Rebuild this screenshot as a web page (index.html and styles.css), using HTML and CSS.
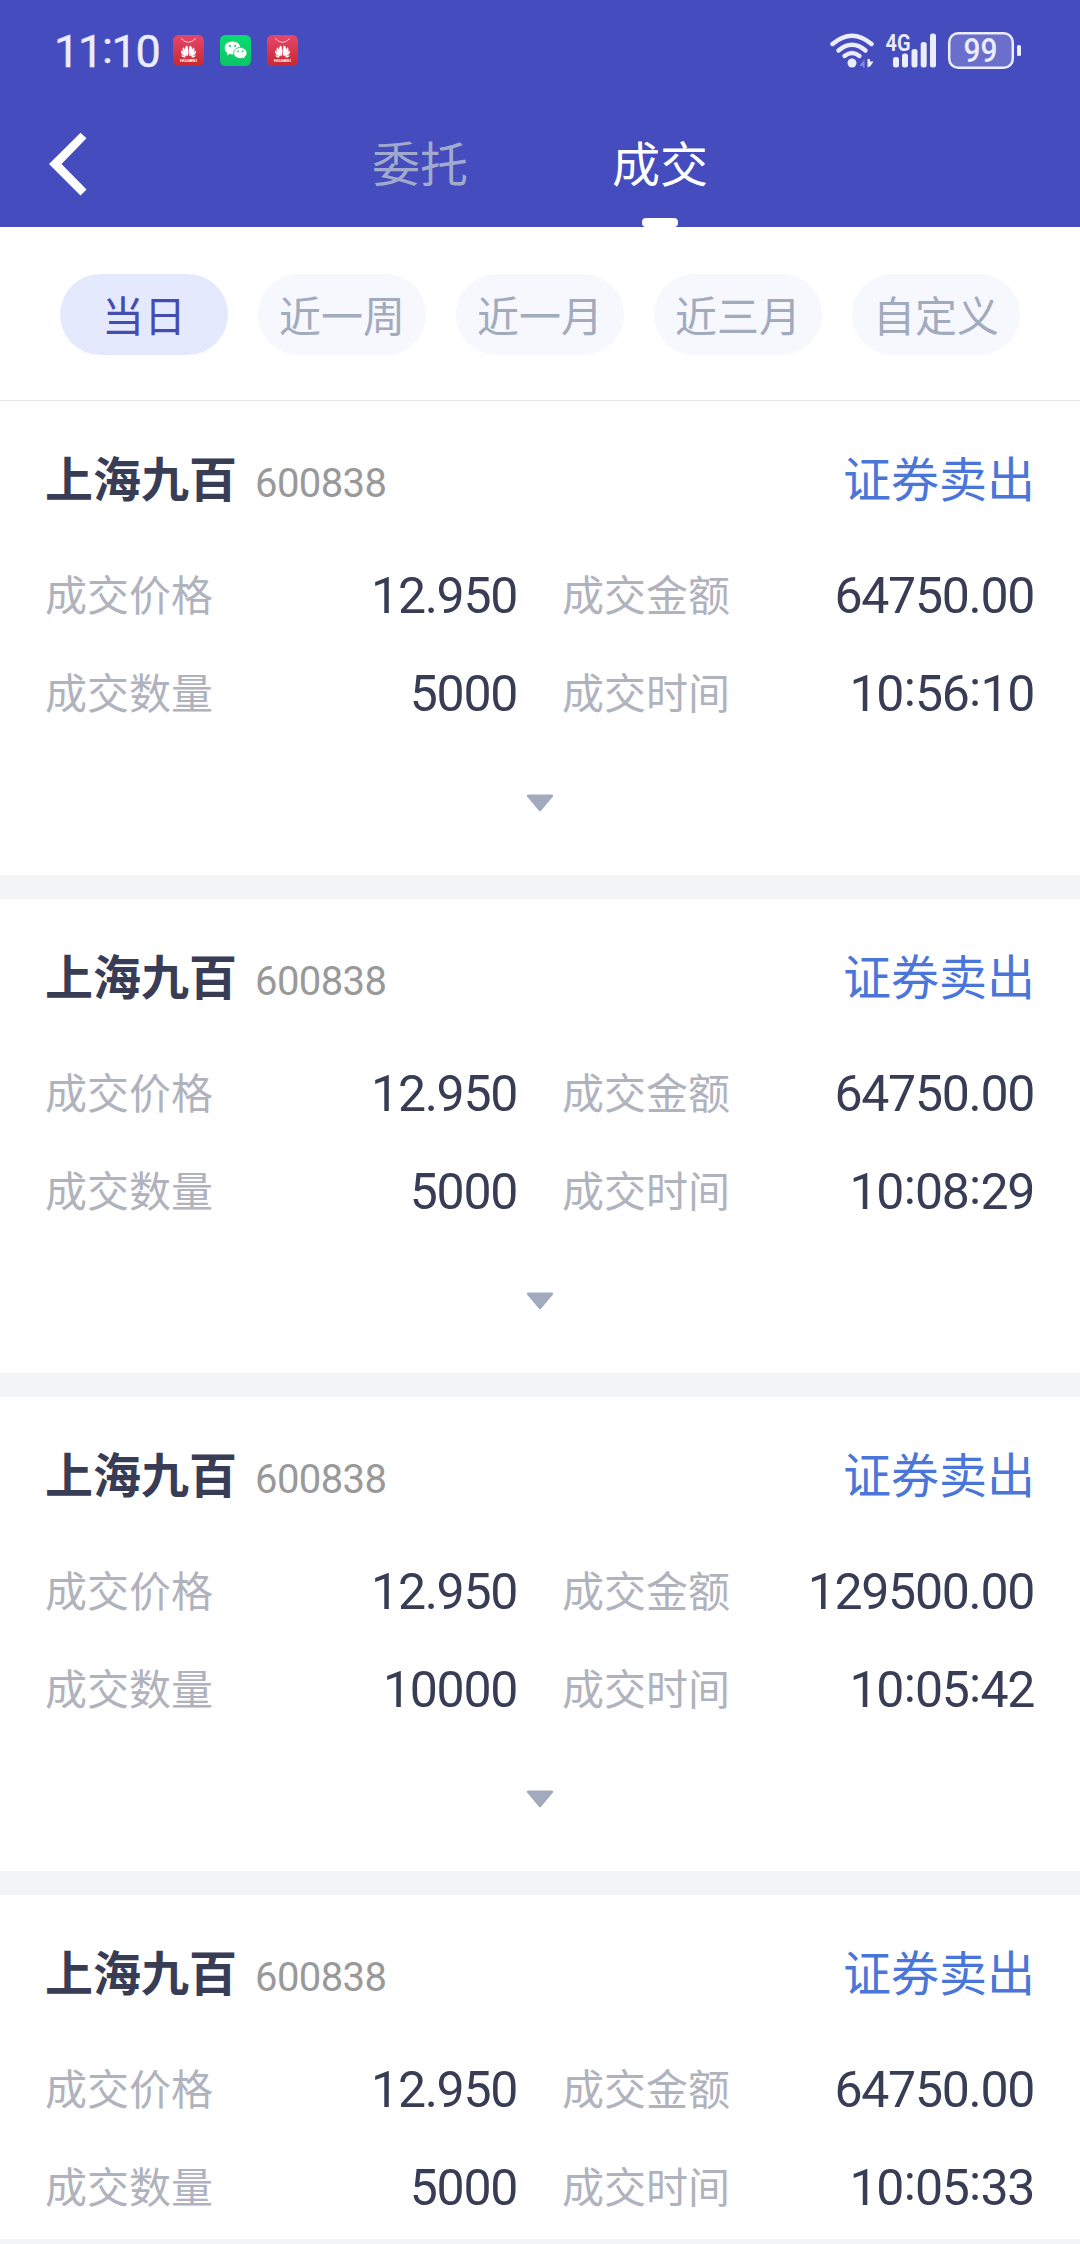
FILE: index.html
```html
<!DOCTYPE html>
<html lang="zh-CN">
<head>
<meta charset="utf-8">
<title>成交</title>
<link rel="stylesheet" href="styles.css">
</head>
<body>
<svg class="defs" width="0" height="0" aria-hidden="true">
  <defs>
    <linearGradient id="red" x1="0" y1="0" x2="0" y2="1"><stop offset="0" stop-color="#e5476a"/><stop offset="1" stop-color="#cb2731"/></linearGradient>
    <linearGradient id="green" x1="0" y1="0" x2="0" y2="1"><stop offset="0" stop-color="#08dc70"/><stop offset="1" stop-color="#0cc565"/></linearGradient>
    <symbol id="huawei" viewBox="0 0 31 31">
      <rect width="31" height="31" rx="5.5" fill="url(#red)"/>
      <path d="M8 3.2Q15.500 11.500 23 3.200" fill="none" stroke="#ffd5da" stroke-width="1"/>
      <g fill="#fff">
        <path d="M14.900 21.300C12 17.500 10.500 12.500 14 10.600C15.600 13 15.400 18 14.900 21.300Z"/>
        <path d="M14 21.300C9.500 18.500 8.500 14.500 10.300 12.300C12.500 14.500 13.800 18 14 21.300Z"/>
        <path d="M13.300 21.500C9 20.500 7.600 18 8 15.500C10.500 17 12.400 19 13.300 21.500Z"/>
        <path d="M12.800 22.200C10.500 23 8.800 22 8.200 20.300C10 20.400 11.500 21 12.800 22.200Z"/>
        <path d="M16.100 21.300C19 17.500 20.500 12.500 17 10.600C15.400 13 15.600 18 16.100 21.300Z"/>
        <path d="M17 21.300C21.500 18.500 22.500 14.500 20.700 12.300C18.500 14.500 17.200 18 17 21.300Z"/>
        <path d="M17.700 21.500C22 20.500 23.400 18 23 15.500C20.500 17 18.600 19 17.700 21.500Z"/>
        <path d="M18.200 22.200C20.500 23 22.200 22 22.800 20.300C21 20.400 19.500 21 18.200 22.200Z"/>
      </g>
      <text x="15.500" y="27.300" text-anchor="middle" textLength="17" lengthAdjust="spacingAndGlyphs" class="brand">HUAWEI</text>
    </symbol>
  </defs>
</svg>

<header class="top">
  <div class="status">
    <span class="clock">11<i>:</i>10</span>
    <div class="apps">
      <svg width="31" height="31"><use href="#huawei"/></svg>
      <svg width="31" height="31" viewBox="0 0 31 31">
        <rect width="31" height="31" rx="5.500" fill="url(#green)"/>
        <path d="M12.500 6.500C8 6.500 4.700 9.300 4.700 13C4.700 15.200 5.700 16.900 7.400 18L6.700 20.500L9.500 19C10.500 19.300 11.500 19.400 12.500 19.400C17 19.400 20.300 16.500 20.300 13C20.300 9.300 17 6.500 12.500 6.500Z" fill="#fff"/>
        <path d="M20.300 12.500C16.600 12.500 13.600 14.900 13.600 18C13.600 21.100 16.600 23.400 20.300 23.400C21.200 23.400 22 23.300 22.800 23L25 24.200L24.500 22.100C26 21.100 27 19.700 27 18C27 14.900 24 12.500 20.300 12.500Z" fill="#fff" stroke="#0acc69" stroke-width=".8"/>
        <g fill="#0acc69"><circle cx="9.900" cy="11" r="1.100"/><circle cx="15.200" cy="11" r="1.100"/><circle cx="18.100" cy="16.300" r=".9"/><circle cx="22.600" cy="16.300" r=".9"/></g>
      </svg>
      <svg width="31" height="31"><use href="#huawei"/></svg>
    </div>
    <svg class="signals" width="192" height="46" viewBox="0 -6 192 46">
      <g fill="none" stroke="#ececff" stroke-width="4.400" stroke-linecap="round">
        <path d="M2.500 13Q22 -3.500 41.500 13"/>
        <path d="M8.500 19.500Q22 8 35.500 19.500"/>
        <path d="M14.500 25Q22 19 29.500 25"/>
      </g>
      <circle cx="22" cy="32" r="4.500" fill="#ececff"/>
      <path d="M30 34L34.500 28.500V36.500H33V35H30Z" fill="#8287d6"/>
      <path d="M37.500 28V36.500L40.500 35L43.500 30.500H40V28Z" fill="#ececff"/>
      <text x="55.500" y="19.500" textLength="25" lengthAdjust="spacingAndGlyphs" class="net">4G</text>
      <g fill="#ececff">
        <rect x="63" y="26" width="6" height="10.500" rx="2.500"/>
        <rect x="72" y="22.500" width="6" height="14" rx="2.500"/>
        <rect x="81.500" y="18" width="6" height="18.500" rx="2.500"/>
        <rect x="90.700" y="11" width="6" height="25.500" rx="2.500"/>
        <rect x="100" y="2.500" width="6" height="34" rx="2.500"/>
        <rect x="187" y="14" width="4" height="11" rx="1.500"/>
      </g>
      <rect x="119.200" y="2.200" width="63.600" height="34.600" rx="9" fill="#696fca" stroke="#ececff" stroke-width="2.500"/>
      <text x="133.500" y="31" textLength="34" lengthAdjust="spacingAndGlyphs" class="charge">99</text>
    </svg>
  </div>
  <nav class="nav">
    <svg class="back" width="38" height="64" viewBox="0 0 38 64"><path d="M31.500 .7L37.500 6.300L12.500 32L37.500 57.500L31.500 63.500L0 32Z" fill="#fff"/></svg>
    <div class="tabs">
      <span class="tab">委托</span>
      <span class="tab tab-on">成交</span>
    </div>
  </nav>
</header>

<div class="filters">
  <span class="chip chip-on">当日</span>
  <span class="chip">近一周</span>
  <span class="chip">近一月</span>
  <span class="chip">近三月</span>
  <span class="chip">自定义</span>
</div>

<main class="list">
  <section class="card">
    <div class="head"><b class="name">上海九百</b><span class="code">600838</span><span class="side">证券卖出</span></div>
    <dl class="grid">
      <div class="cell"><dt>成交价格</dt><dd>12.950</dd></div>
      <div class="cell"><dt>成交金额</dt><dd>64750.00</dd></div>
      <div class="cell"><dt>成交数量</dt><dd>5000</dd></div>
      <div class="cell"><dt>成交时间</dt><dd>10<i>:</i>56<i>:</i>10</dd></div>
    </dl>
    <svg class="more" width="28" height="18" viewBox="0 0 28 18"><path d="M2 .5H26Q28 .8 27 2.500L15 16.800Q14 18 13 16.800L1 2.500Q0 .8 2 .5Z"/></svg>
  </section>
  <section class="card">
    <div class="head"><b class="name">上海九百</b><span class="code">600838</span><span class="side">证券卖出</span></div>
    <dl class="grid">
      <div class="cell"><dt>成交价格</dt><dd>12.950</dd></div>
      <div class="cell"><dt>成交金额</dt><dd>64750.00</dd></div>
      <div class="cell"><dt>成交数量</dt><dd>5000</dd></div>
      <div class="cell"><dt>成交时间</dt><dd>10<i>:</i>08<i>:</i>29</dd></div>
    </dl>
    <svg class="more" width="28" height="18" viewBox="0 0 28 18"><path d="M2 .5H26Q28 .8 27 2.500L15 16.800Q14 18 13 16.800L1 2.500Q0 .8 2 .5Z"/></svg>
  </section>
  <section class="card">
    <div class="head"><b class="name">上海九百</b><span class="code">600838</span><span class="side">证券卖出</span></div>
    <dl class="grid">
      <div class="cell"><dt>成交价格</dt><dd>12.950</dd></div>
      <div class="cell"><dt>成交金额</dt><dd>129500.00</dd></div>
      <div class="cell"><dt>成交数量</dt><dd>10000</dd></div>
      <div class="cell"><dt>成交时间</dt><dd>10<i>:</i>05<i>:</i>42</dd></div>
    </dl>
    <svg class="more" width="28" height="18" viewBox="0 0 28 18"><path d="M2 .5H26Q28 .8 27 2.500L15 16.800Q14 18 13 16.800L1 2.500Q0 .8 2 .5Z"/></svg>
  </section>
  <section class="card card-last">
    <div class="head"><b class="name">上海九百</b><span class="code">600838</span><span class="side">证券卖出</span></div>
    <dl class="grid">
      <div class="cell"><dt>成交价格</dt><dd>12.950</dd></div>
      <div class="cell"><dt>成交金额</dt><dd>64750.00</dd></div>
      <div class="cell"><dt>成交数量</dt><dd>5000</dd></div>
      <div class="cell"><dt>成交时间</dt><dd>10<i>:</i>05<i>:</i>33</dd></div>
    </dl>
  </section>
</main>
</body>
</html>
```
FILE: styles.css
```css
* { box-sizing: border-box; margin: 0; padding: 0; }

body {
  width: 1080px;
  height: 2244px;
  overflow: hidden;
  background: #f3f4f6;
  font-family: "Noto Sans CJK SC", sans-serif;
  color: #383d55;
}

svg { display: block; flex: none; }
i { font-style: normal; line-height: 0; }
.defs { position: absolute; }

.top { height: 227px; background: #444cbe; }

.status {
  display: flex;
  align-items: flex-start;
  height: 101px;
  padding: 25px 58px 0 54px;
}
.clock {
  width: 119px;
  padding-top: 6px;
  font: 400 45px/41px Roboto, sans-serif;
  letter-spacing: -1.3px;
  color: #ececff;
  -webkit-text-stroke: .4px #ececff;
}
.clock i { vertical-align: 4px; }
.apps { display: flex; gap: 16px; padding-top: 10px; }
.signals { margin-left: auto; }
.brand { font: 700 4px Roboto, sans-serif; fill: #fff; }
.net { font: 600 23.5px Roboto, sans-serif; fill: #ececff; }
.charge { font: 500 33px Roboto, sans-serif; fill: #ececff; }

.nav {
  display: grid;
  grid-template-columns: 252px 576px 252px;
  height: 126px;
}
.back { margin: 31px 0 0 49px; }
.tabs { display: flex; justify-content: center; gap: 144px; }
.tab {
  display: flex;
  flex-direction: column;
  align-items: center;
  width: 96px;
  font-size: 48px;
  line-height: 72px;
  padding-top: 24px;
  color: #a2aacb;
}
.tab-on { color: #fff; }
.tab-on::after {
  content: "";
  width: 36px;
  height: 9px;
  margin-top: auto;
  border-radius: 4px;
  background: #fff;
}

.filters {
  display: flex;
  gap: 30px;
  height: 174px;
  padding: 47px 60px 0;
  background: #fff;
  border-bottom: 1px solid #e2e4e5;
}
.chip {
  flex: 1;
  height: 81px;
  border-radius: 41px;
  background: #f6f8fd;
  color: #a2abbe;
  font-size: 42px;
  line-height: 79px;
  text-align: center;
}
.chip-on { background: #e4e9fe; color: #444cb0; }

.list { display: flex; flex-direction: column; gap: 24px; }
.card { height: 474px; padding: 40px 45px 0; background: #fff; }
.card-last { height: 344px; }

.head { display: flex; align-items: baseline; height: 104px; line-height: 70px; }
.name { font-size: 48px; font-weight: 700; }
.code {
  margin-left: 18px;
  font-family: Roboto, sans-serif;
  font-size: 40px;
  letter-spacing: -.6px;
  color: #999;
}
.side { margin-left: auto; font-size: 48px; color: #4a76d9; }

.grid { display: grid; grid-template-columns: 1fr 1fr; column-gap: 44px; }
.cell { display: flex; justify-content: space-between; height: 98px; line-height: 96px; }
dt { font-size: 42px; color: #b0b3bd; }
dd {
  padding-right: 1px;
  font-family: Roboto, sans-serif;
  font-size: 50px;
  line-height: 103px;
  letter-spacing: -1.3px;
}
dd i { vertical-align: 5px; margin: 0 .5px; }

.more { margin: 53px auto 0; fill: #a2abbe; }
```
